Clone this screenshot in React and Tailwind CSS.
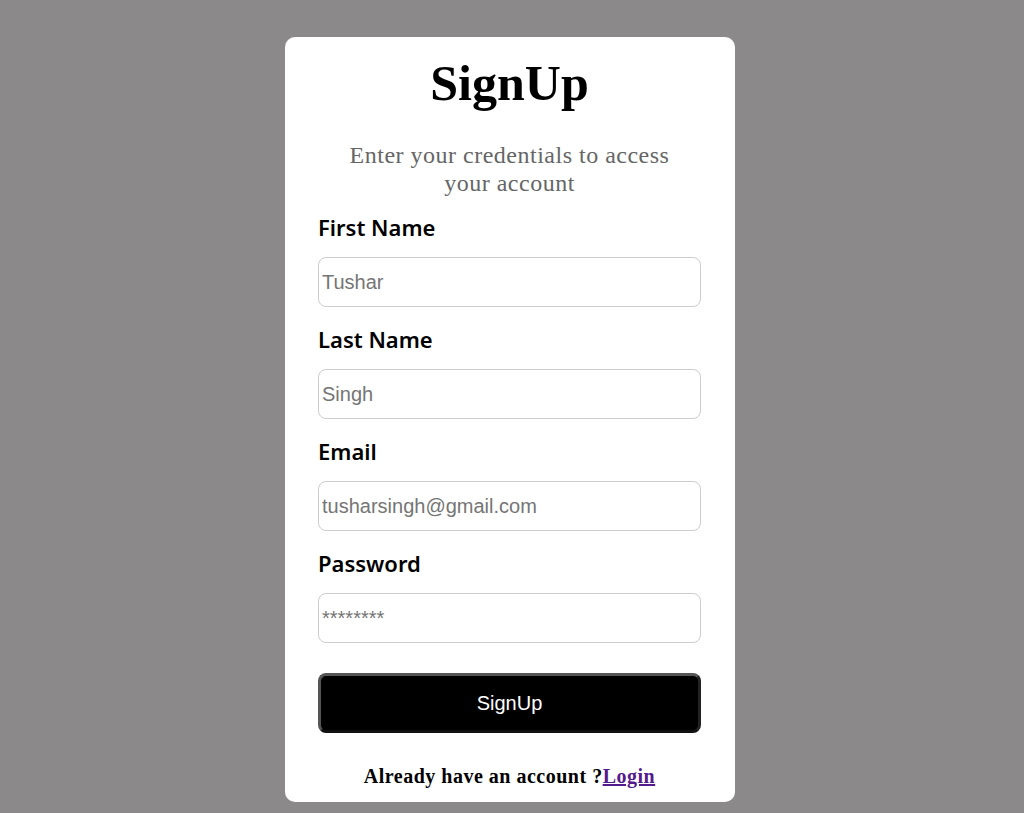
const fields = [
  { label: "First Name", ph: "Tushar", type: "text" },
  { label: "Last Name", ph: "Singh", type: "text" },
  { label: "Email", ph: "tusharsingh@gmail.com", type: "email" },
  { label: "Password", ph: "********", type: "password" },
];

export default function App() {
  return (
    <div className="min-h-[813px] w-full bg-[#8b8989] flex justify-center pr-[4px] pt-[37px] pb-[11px]">
      <div className="w-[450px] h-[765px] bg-white rounded-[10px] pl-[33px] pr-[34px] flex flex-col">
        <h1 className="mt-[17px] text-center text-[50px] leading-[58px] font-bold text-black font-['Liberation_Serif',serif]">
          SignUp
        </h1>
        <p className="mt-[29px] mx-auto w-[360px] text-center text-[24px] leading-[28px] tracking-[0.5px] text-[#666] font-['Liberation_Serif',serif]">
          Enter your credentials to access
          <br />
          your account
        </p>
        <div className="mt-[15px] flex flex-col gap-[17px]">
          {fields.map((f) => (
            <div key={f.label} className="flex flex-col">
              <label className="text-[22px] leading-[30px] font-semibold text-black font-['Noto_Sans',sans-serif]">
                {f.label}
              </label>
              <input
                type={f.type}
                placeholder={f.ph}
                className="mt-[15px] h-[50px] w-full border border-[#cccccc] rounded-[8px] px-[3px] text-[20px] placeholder:text-[#757575] outline-none font-['Liberation_Sans',Arial,sans-serif]"
              />
            </div>
          ))}
        </div>
        <button className="mt-[30px] h-[60px] w-full bg-black text-white text-[20px] rounded-[8px] border-[3px] border-t-[#555] border-l-[#555] border-r-[#222] border-b-[#111] font-['Liberation_Sans',Arial,sans-serif]">
          SignUp
        </button>
        <p className="mt-[31px] text-center text-[20px] leading-[24px] tracking-[0.5px] font-bold text-black font-['Liberation_Serif',serif]">
          Already have an account ?
          <a href="#" className="text-[#551a8b] underline">
            Login
          </a>
        </p>
      </div>
    </div>
  );
}
